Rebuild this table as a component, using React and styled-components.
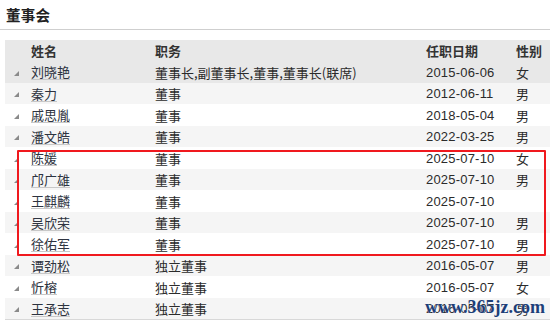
import React from "react";
import styled, { createGlobalStyle } from "styled-components";

const Global = createGlobalStyle`
  html, body { margin: 0; padding: 0; background: #fff; }
  body { font-family: "Liberation Sans", "Noto Sans CJK SC", sans-serif; color: #333; overflow: hidden; }
`;

const Page = styled.div`
  position: relative;
  width: 550px;
  height: 325px;
  overflow: hidden;
`;

const TitleBar = styled.div`
  border-bottom: 1px solid #cfcfcf;
  display: flex;
  align-items: center;
  padding-left: 6px;
  box-sizing: border-box;
  height: 30px;
  padding-bottom: 1px;
`;

const Title = styled.h2`
  margin: 0;
  font-family: "Noto Sans CJK SC", sans-serif;
  font-size: 14.5px;
  font-weight: 700;
  color: #222;
  letter-spacing: 0.3px;
`;

const Table = styled.div`
  margin: 10px 0 0 5px;
  display: grid;
  grid-template-columns: 26px 124px 271px 90px 1fr;
  border-bottom: 1px solid #d8d8d8;
`;

const Row = styled.div`
  display: contents;
  & > div {
    background: ${(p) => p.$bg};
    height: ${(p) => p.$h}px;
  }
`;

const Cell = styled.div`
  display: flex;
  align-items: center;
  font-size: 13px;
  white-space: nowrap;
  font-family: ${(p) => (p.$num ? '"Liberation Sans", sans-serif' : '"Noto Sans CJK SC", sans-serif')};
  font-weight: ${(p) => (p.$head ? 700 : 400)};
  color: ${(p) => (p.$head ? "#333" : "#2b2b2b")};
  letter-spacing: ${(p) => (p.$num ? "0.2px" : "0")};
`;

const Arrow = styled.span`
  display: block;
  width: 0;
  height: 0;
  margin-left: 9px;
  margin-top: 2px;
  border-left: 5px solid transparent;
  border-bottom: 5px solid #8a8a8a;
`;

const Name = styled.span`
  border-bottom: 1px solid #c8c8c8;
  line-height: 15px;
  color: #2d3340;
`;

const Highlight = styled.div`
  position: absolute;
  left: 17px;
  top: 150px;
  width: 529px;
  height: 106px;
  border: 2px solid #f0191e;
  border-radius: 1px;
  box-sizing: border-box;
  pointer-events: none;
`;

const Watermark = styled.div`
  position: absolute;
  left: 425px;
  top: 297px;
  font-family: "Liberation Serif", "DejaVu Serif", serif;
  font-weight: 700;
  font-size: 18px;
  color: #1d3f78;
  letter-spacing: 0px;
  text-shadow: 0 0 1px #fff;
`;

const rows = [
  ["刘晓艳", "董事长,副董事长,董事,董事长(联席)", "2015-06-06", "女"],
  ["秦力", "董事", "2012-06-11", "男"],
  ["戚思胤", "董事", "2018-05-04", "男"],
  ["潘文皓", "董事", "2022-03-25", "男"],
  ["陈媛", "董事", "2025-07-10", "女"],
  ["邝广雄", "董事", "2025-07-10", "男"],
  ["王麒麟", "董事", "2025-07-10", ""],
  ["吴欣荣", "董事", "2025-07-10", "男"],
  ["徐佑军", "董事", "2025-07-10", "男"],
  ["谭劲松", "独立董事", "2016-05-07", "男"],
  ["忻榕", "独立董事", "2016-05-07", "女"],
  ["王承志", "独立董事", "2016-05-07", "男"],
];

const heights = [22, 21, 22, 21, 22, 21, 22, 21, 22, 21, 22, 21];

export default function App() {
  return (
    <Page>
      <Global />
      <TitleBar>
        <Title>董事会</Title>
      </TitleBar>
      <Table>
        <Row $bg="#e8e8e8" $h={21}>
          <Cell $head />
          <Cell $head>姓名</Cell>
          <Cell $head>职务</Cell>
          <Cell $head>任职日期</Cell>
          <Cell $head>性别</Cell>
        </Row>
        {rows.map((r, i) => (
          <Row
            key={i}
            $h={heights[i]}
            $bg={i === 0 ? "#e8e8e8" : i % 2 === 1 ? "#f5f5f5" : "#ffffff"}
          >
            <Cell>
              <Arrow />
            </Cell>
            <Cell>
              <Name>{r[0]}</Name>
            </Cell>
            <Cell>{r[1]}</Cell>
            <Cell $num>{r[2]}</Cell>
            <Cell>{r[3]}</Cell>
          </Row>
        ))}
      </Table>
      <Highlight />
      <Watermark>www.365jz.com</Watermark>
    </Page>
  );
}
